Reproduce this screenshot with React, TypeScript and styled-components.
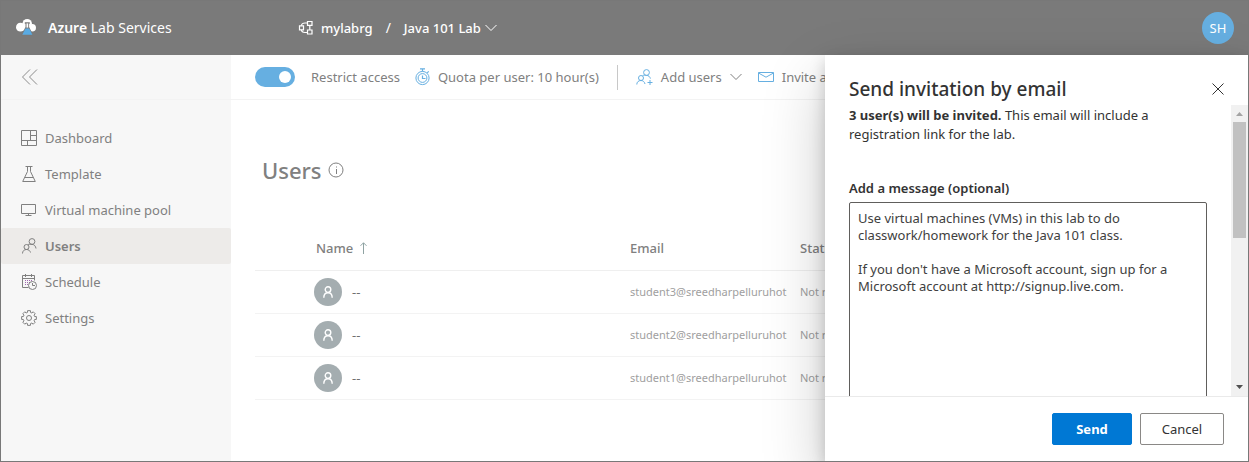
import React from 'react';
import styled, { createGlobalStyle } from 'styled-components';

const GlobalStyle = createGlobalStyle`
  *, *::before, *::after { box-sizing: border-box; }
  body { margin: 0; }
  body, button, input, textarea {
    font-family: "Noto Sans", "Open Sans", sans-serif;
    font-size: 13px;
  }
  button { cursor: pointer; }
`;

const Page = styled.div`
  display: flex;
  flex-direction: column;
  height: 100vh;
  overflow: hidden;
  border: 1px solid #787878;
  background: #ffffff;
  color: #808080;
  line-height: 20px;
`;

const Header = styled.header`
  display: flex;
  align-items: center;
  flex: none;
  height: 54px;
  padding: 0 14px;
  background: #7a7a7a;
  color: #ffffff;
`;

const Brand = styled.a`
  display: flex;
  align-items: center;
  gap: 11px;
  width: 283px;
  color: inherit;
  font-size: 14px;
  text-decoration: none;
  white-space: nowrap;
  strong { font-weight: 600; }
`;

const Crumbs = styled.nav`
  display: flex;
  align-items: center;
  flex: 1;
`;

const CrumbLink = styled.a`
  display: flex;
  align-items: center;
  gap: 7px;
  color: inherit;
  font-weight: 500;
  text-decoration: none;
`;

const Slash = styled.span`
  margin: 0 13px;
  font-size: 14px;
`;

const PlainButton = styled.button`
  display: flex;
  align-items: center;
  padding: 0;
  border: 0;
  background: none;
  color: inherit;
  line-height: 20px;
  white-space: nowrap;
`;

const CrumbButton = styled(PlainButton)`
  gap: 4px;
  font-weight: 500;
`;

const Account = styled.button`
  width: 32px;
  height: 32px;
  padding: 0;
  border: 0;
  border-radius: 50%;
  background: #66afe1;
  color: #ffffff;
`;

const Body = styled.div`
  position: relative;
  display: flex;
  flex: 1;
  min-height: 0;
`;

const Sidebar = styled.aside`
  flex: none;
  width: 230px;
  background: #f7f7f7;
`;

const CollapseBar = styled.div`
  display: flex;
  align-items: center;
  height: 45px;
  padding-left: 20px;
  border-bottom: 1px solid #f3f3f3;
`;

const NavList = styled.ul`
  margin: 0;
  padding: 20px 0 0;
  list-style: none;
`;

const NavLink = styled.a<{ $active?: boolean }>`
  display: flex;
  align-items: center;
  gap: 8px;
  height: 36px;
  padding-left: 20px;
  border-radius: 2px;
  background: ${(p) => (p.$active ? '#edebe9' : 'transparent')};
  color: #808080;
  font-weight: ${(p) => (p.$active ? 600 : 400)};
  text-decoration: none;
`;

const Main = styled.main`
  flex: 1;
  min-width: 0;
`;

const Toolbar = styled.div`
  display: flex;
  align-items: center;
  height: 45px;
  padding-left: 24px;
  border-bottom: 1px solid #f3f3f3;
  white-space: nowrap;
`;

const ToggleLabel = styled.label`
  display: flex;
  align-items: center;
  gap: 16px;
  margin-right: 15px;
`;

const Toggle = styled.input`
  appearance: none;
  display: flex;
  align-items: center;
  justify-content: flex-end;
  width: 40px;
  height: 20px;
  margin: 0;
  padding: 0 4px;
  border-radius: 10px;
  background: #66afe1;
  &::before {
    content: '';
    width: 12px;
    height: 12px;
    border-radius: 50%;
    background: #ffffff;
  }
`;

const Command = styled(PlainButton)`
  gap: 8px;
`;

const Divider = styled.div`
  width: 1px;
  height: 25px;
  margin: 0 18px;
  background: #c8c8c8;
`;

const CommandGroup = styled.div`
  display: flex;
  gap: 16px;
`;

const Content = styled.section`
  padding: 52px 24px 0;
`;

const TitleRow = styled.div`
  display: flex;
  align-items: center;
  gap: 6px;
  height: 36px;
  padding-left: 7px;
`;

const PageTitle = styled.h1`
  margin: 0;
  font-size: 22px;
  font-weight: 500;
  line-height: 36px;
`;

const UserTable = styled.table`
  width: 100%;
  margin-top: 37px;
  border-collapse: collapse;
  table-layout: fixed;
`;

const SpacerCol = styled.col`width: 59px;`;
const NameCol = styled.col`width: 316px;`;
const EmailCol = styled.col`width: 170px;`;

const HeadCell = styled.th<{ $inset?: boolean }>`
  height: 45px;
  padding: 2px 0 0 ${(p) => (p.$inset ? 2 : 0)}px;
  border-bottom: 1px solid #efefef;
  font-weight: 500;
  text-align: left;
  span { display: flex; align-items: center; gap: 6px; }
`;

const Cell = styled.td`
  height: 43px;
  padding: 0;
  border-bottom: 1px solid #f3f3f3;
  color: #a0a0a0;
  font-size: 11px;
`;

const Clip = styled.div`
  width: 157px;
  overflow: hidden;
  white-space: nowrap;
`;

const Person = styled.div`
  display: flex;
  align-items: center;
  gap: 10px;
  color: #707070;
  font-size: 13px;
`;

const Avatar = styled.span`
  display: flex;
  align-items: center;
  justify-content: center;
  width: 28px;
  height: 28px;
  border-radius: 50%;
  background: #a4adb0;
`;

const Panel = styled.section`
  position: absolute;
  top: 0;
  right: 0;
  bottom: 0;
  display: flex;
  flex-direction: column;
  width: 423px;
  background: #ffffff;
  color: #333333;
  box-shadow: 0 26px 58px rgba(0, 0, 0, 0.22), 0 5px 15px rgba(0, 0, 0, 0.18);
`;

const PanelHeader = styled.header`
  display: flex;
  align-items: center;
  justify-content: space-between;
  flex: none;
  height: 50px;
  padding: 18px 24px 0;
`;

const PanelTitle = styled.h2`
  margin: 0;
  font-size: 19px;
  font-weight: 500;
  line-height: 30px;
`;

const PanelMiddle = styled.div`
  display: flex;
  flex: 1;
  min-height: 0;
`;

const PanelScroll = styled.div`
  display: flex;
  flex-direction: column;
  flex: 1;
  min-width: 0;
  padding: 1px 24px 0;
  overflow: hidden;
`;

const Intro = styled.p`
  flex: none;
  margin: 0 0 34px;
  line-height: 19px;
`;

const FieldLabel = styled.label`
  flex: none;
  margin-bottom: 3px;
  font-weight: 600;
  line-height: 21px;
`;

const Message = styled.textarea`
  display: block;
  flex: none;
  width: 100%;
  height: 240px;
  padding: 7px 8px;
  overflow: hidden;
  border: 1px solid #605e5c;
  border-radius: 2px;
  outline: 0;
  resize: none;
  background: #ffffff;
  color: #404040;
  line-height: 17px;
`;

const ScrollTrack = styled.div`
  display: flex;
  flex-direction: column;
  align-items: center;
  flex: none;
  width: 17px;
  background: #f1f1f1;
`;

const ScrollArrow = styled.svg`
  flex: none;
  width: 17px;
  height: 17px;
`;

const ScrollThumb = styled.div`
  width: 13px;
  height: 40%;
  margin-bottom: auto;
  background: #c1c1c1;
`;

const PanelFooter = styled.footer`
  display: flex;
  justify-content: flex-end;
  gap: 8px;
  flex: none;
  padding: 16px 24px;
  border-top: 1px solid #eaeaea;
`;

const ActionButton = styled.button<{ $primary?: boolean }>`
  min-width: ${(p) => (p.$primary ? 80 : 84)}px;
  height: 32px;
  padding: 0 16px;
  border: 1px solid ${(p) => (p.$primary ? '#0078d4' : '#8a8886')};
  border-radius: 2px;
  background: ${(p) => (p.$primary ? '#0078d4' : '#ffffff')};
  color: ${(p) => (p.$primary ? '#ffffff' : '#333333')};
  font-weight: ${(p) => (p.$primary ? 700 : 400)};
`;

const Glyph = styled.svg`
  flex: none;
  fill: none;
  stroke: currentColor;
`;

const BlueGlyph = styled(Glyph)`
  color: #66afe1;
`;

const LogoIcon = () => (
  <svg width="22" height="20" viewBox="0 0 22 20" aria-hidden="true">
    <g fill="#ffffff">
      <circle cx="5.4" cy="9.2" r="4.4" />
      <circle cx="12.2" cy="5.600" r="4.700" />
      <circle cx="17.200" cy="9.800" r="3.800" />
      <path d="M6 5.500h10v7H6z" />
    </g>
    <path d="M9.800 4.200h5v1.600h-.7v3.200l4.600 8.800H6l4.500-8.800V5.800h-.7z" fill="#7a7a7a" />
    <path d="M11.500 5.400h1.700v4.200h-1.700z" fill="#ffffff" />
    <path d="M10.500 10.600h3.700l3.200 6.200H7.300z" fill="#5aabe3" />
  </svg>
);

const GroupIcon = () => (
  <Glyph width="16" height="16" viewBox="0 0 16 16" strokeWidth="1.2" aria-hidden="true">
    <path d="M9.500 1.500h4.500v3.800H9.500zM9.500 10h4.500v4H9.500zM1.500 5.800h4v4h-4z" />
    <path d="M3.500 5.800C3.500 4 5 3 7 3h2.500M3.500 9.800C3.500 11.500 5 12.500 7 12.500h2.500M11.800 5.300V10" />
  </Glyph>
);

const Chevron = () => (
  <Glyph width="12" height="8" viewBox="0 0 12 8" aria-hidden="true">
    <path d="M.5 1L6 6.500L11.500 1" />
  </Glyph>
);

const CollapseIcon = () => (
  <Glyph width="18" height="16" viewBox="0 0 18 16" strokeWidth="0.9" aria-hidden="true">
    <path d="M9 .5L1.500 8L9 15.500M16 .5L8.500 8l7.500 7.500" />
  </Glyph>
);

const DashboardIcon = () => (
  <Glyph width="16" height="16" viewBox="0 0 16 16" aria-hidden="true">
    <path d="M.5.5h15v15H.5zM9.500.5v10M.5 10.500h15M9.500 5.500h6M6.500 10.500v5" />
  </Glyph>
);

const FlaskIcon = () => (
  <Glyph width="16" height="16" viewBox="0 0 16 16" aria-hidden="true">
    <path d="M4.500.5h7M6.500.5v5L1.700 15.500h12.600L9.500 5.500v-5M3.700 11.500h8.600" />
  </Glyph>
);

const MonitorIcon = () => (
  <Glyph width="16" height="16" viewBox="0 0 16 16" aria-hidden="true">
    <path d="M.5 2.500h14v9H.5zM7.500 11.500v2M4.500 13.500h6" />
  </Glyph>
);

const UsersIcon = () => (
  <Glyph width="16" height="16" viewBox="0 0 16 16" aria-hidden="true">
    <circle cx="11" cy="3.500" r="2.900" />
    <circle cx="5.500" cy="9" r="2.500" />
    <path d="M1.500 15.500c0-2.500 1.700-4 4-4s3.500 1.300 4 3M6.800 6.800C8 5.800 9.500 6.400 11 6.400c2.300 0 3.700 1.800 4 4.100" />
  </Glyph>
);

const ScheduleIcon = () => (
  <Glyph width="16" height="16" viewBox="0 0 16 16" aria-hidden="true">
    <path d="M7.500 13.500h-6v-12h12v5M1.500 4.500h12M4.500 0v3M10.500 0v3" />
    <path d="M4 6.500h8M4 8.500h5M4 10.500h3" strokeDasharray="1 1" stroke="#a06ab0" />
    <circle cx="11.500" cy="11.500" r="4" />
    <path d="M11.500 9v2.500h2.500" />
  </Glyph>
);

const teeth = Array.from({ length: 8 }, (_, i) => {
  const at = (r: number, deg: number) => {
    const a = ((i * 45 + deg) * Math.PI) / 180;
    return `${(8 + r * Math.cos(a)).toFixed(2)} ${(8 + r * Math.sin(a)).toFixed(2)}`;
  };
  return `${i ? 'L' : 'M'}${at(5.800, -15)}L${at(7.500, -11)}L${at(7.500, 11)}L${at(5.800, 15)}`;
}).join('');

const GearIcon = () => (
  <Glyph width="16" height="16" viewBox="0 0 16 16" aria-hidden="true">
    <path d={`${teeth}Z`} strokeLinejoin="round" />
    <circle cx="8" cy="8" r="2.500" />
  </Glyph>
);

const StopwatchIcon = () => (
  <BlueGlyph width="15" height="18" viewBox="0 0 15 18" aria-hidden="true">
    <circle cx="7.500" cy="10" r="6.600" />
    <circle cx="7.500" cy="10" r="4.400" />
    <path d="M5 .9h5M7.500 1v2.500M12.200 4.800l1.500-1.500M7.500 7.500v3h3" strokeWidth="1.200" />
  </BlueGlyph>
);

const AddUsersIcon = () => (
  <BlueGlyph width="17" height="16" viewBox="0 0 17 16" aria-hidden="true">
    <circle cx="10.500" cy="3.500" r="2.900" />
    <circle cx="5" cy="9" r="2.500" />
    <path d="M.8 15.500c0-2.500 1.700-4 4.200-4 2 0 3.500 1.300 4 3.500M6.500 6.800c1.200-1 2.500-.4 4-.4 2 0 3.400 1.200 3.900 3.200M11.500 13.500h5M14 11v5" />
  </BlueGlyph>
);

const MailIcon = () => (
  <BlueGlyph width="16" height="12" viewBox="0 0 16 12" aria-hidden="true">
    <path d="M.5 1.500h15v9H.5zM.5 2L8 6.200L15.500 2" />
  </BlueGlyph>
);

const InfoIcon = () => (
  <Glyph width="16" height="16" viewBox="0 0 16 16" aria-hidden="true">
    <circle cx="8" cy="8" r="7" />
    <path d="M8.500 7v5M8.500 4.500v1" />
  </Glyph>
);

const SortIcon = () => (
  <Glyph width="9" height="12" viewBox="0 0 9 12" color="#8fa3a3" aria-hidden="true">
    <path d="M4.500 12V.8M1.500 3.800l3-3l3 3" />
  </Glyph>
);

const PersonIcon = () => (
  <Glyph width="12" height="12" viewBox="0 0 12 12" strokeWidth="1.400" color="#ffffff" aria-hidden="true">
    <circle cx="6" cy="3.600" r="2.800" />
    <path d="M1.800 11.800c0-3 1.700-5 4.200-5s4.200 2 4.200 5" />
  </Glyph>
);

const CloseIcon = () => (
  <Glyph width="12" height="12" viewBox="0 0 12 12" aria-hidden="true">
    <path d="M.5.5l11 11M11.500.5l-11 11" />
  </Glyph>
);

const navItems = [
  { label: 'Dashboard', Icon: DashboardIcon },
  { label: 'Template', Icon: FlaskIcon },
  { label: 'Virtual machine pool', Icon: MonitorIcon },
  { label: 'Users', Icon: UsersIcon, active: true },
  { label: 'Schedule', Icon: ScheduleIcon },
  { label: 'Settings', Icon: GearIcon },
];

const users = ['student3', 'student2', 'student1'];

const defaultMessage = `Use virtual machines (VMs) in this lab to do classwork/homework for the Java 101 class.

If you don't have a Microsoft account, sign up for a Microsoft account at http://signup.live.com.`;

export default function App() {
  return (
    <Page>
      <GlobalStyle />
      <Header>
        <Brand href="#home">
          <LogoIcon />
          <span><strong>Azure</strong> Lab Services</span>
        </Brand>
        <Crumbs aria-label="Breadcrumb">
          <CrumbLink href="#group"><GroupIcon />mylabrg</CrumbLink>
          <Slash>/</Slash>
          <CrumbButton type="button">Java 101 Lab<Chevron /></CrumbButton>
        </Crumbs>
        <Account type="button">SH</Account>
      </Header>

      <Body>
        <Sidebar>
          <CollapseBar>
            <PlainButton type="button" aria-label="Collapse navigation"><CollapseIcon /></PlainButton>
          </CollapseBar>
          <nav>
            <NavList>
              {navItems.map(({ label, Icon, active }) => (
                <li key={label}>
                  <NavLink href={`#${label}`} $active={active}><Icon />{label}</NavLink>
                </li>
              ))}
            </NavList>
          </nav>
        </Sidebar>

        <Main>
          <Toolbar>
            <ToggleLabel>
              <Toggle type="checkbox" role="switch" defaultChecked />
              Restrict access
            </ToggleLabel>
            <Command type="button"><StopwatchIcon />Quota per user: 10 hour(s)</Command>
            <Divider />
            <CommandGroup>
              <Command type="button"><AddUsersIcon />Add users<Chevron /></Command>
              <Command type="button"><MailIcon />Invite all</Command>
            </CommandGroup>
          </Toolbar>
          <Content>
            <TitleRow>
              <PageTitle>Users</PageTitle>
              <InfoIcon />
            </TitleRow>
            <UserTable>
              <colgroup><SpacerCol /><NameCol /><EmailCol /><col /></colgroup>
              <thead>
                <tr>
                  <HeadCell aria-label="Select" />
                  <HeadCell $inset><span>Name<SortIcon /></span></HeadCell>
                  <HeadCell>Email</HeadCell>
                  <HeadCell>Status</HeadCell>
                </tr>
              </thead>
              <tbody>
                {users.map((user) => (
                  <tr key={user}>
                    <Cell />
                    <Cell><Person><Avatar><PersonIcon /></Avatar>--</Person></Cell>
                    <Cell><Clip>{user}@sreedharpelluruhotmail.onmicrosoft.com</Clip></Cell>
                    <Cell>Not registered</Cell>
                  </tr>
                ))}
              </tbody>
            </UserTable>
          </Content>
        </Main>

        <Panel role="dialog" aria-labelledby="invite-title">
          <PanelHeader>
            <PanelTitle id="invite-title">Send invitation by email</PanelTitle>
            <PlainButton type="button" aria-label="Close"><CloseIcon /></PlainButton>
          </PanelHeader>
          <PanelMiddle>
            <PanelScroll>
              <Intro>
                <strong>3 user(s) will be invited.</strong> This email will include a registration link for the lab.
              </Intro>
              <FieldLabel htmlFor="message">Add a message (optional)</FieldLabel>
              <Message id="message" defaultValue={defaultMessage} spellCheck={false} />
            </PanelScroll>
            <ScrollTrack aria-hidden="true">
              <ScrollArrow viewBox="0 0 17 17"><path d="M5 11l3.500-4L12 11z" fill="#a3a3a3" /></ScrollArrow>
              <ScrollThumb />
              <ScrollArrow viewBox="0 0 17 17"><path d="M5 6l3.500 4L12 6z" fill="#505050" /></ScrollArrow>
            </ScrollTrack>
          </PanelMiddle>
          <PanelFooter>
            <ActionButton type="button" $primary>Send</ActionButton>
            <ActionButton type="button">Cancel</ActionButton>
          </PanelFooter>
        </Panel>
      </Body>
    </Page>
  );
}
